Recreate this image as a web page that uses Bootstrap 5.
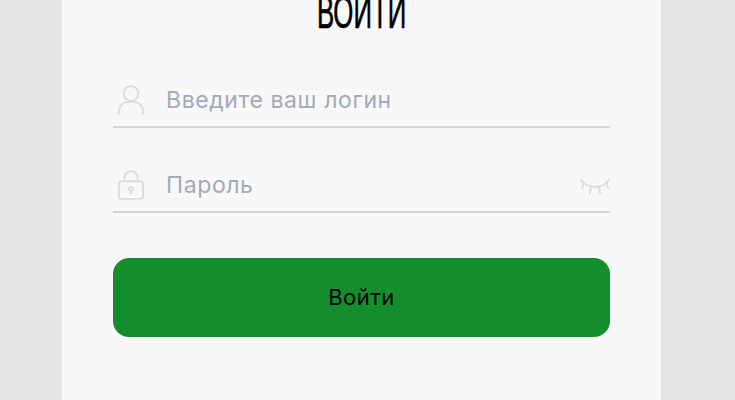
<!DOCTYPE html>
<html lang="ru">
<head>
  <meta charset="UTF-8" />
  <meta name="viewport" content="width=device-width, initial-scale=1" />
  <title>Войти</title>
  <link href="https://cdn.jsdelivr.net/npm/bootstrap@5.3.0/dist/css/bootstrap.min.css" rel="stylesheet" />
  <style>
    html, body { height: 100%; }
    body { background: #e4e4e4; overflow: hidden; font-family: Inter, "Liberation Sans", sans-serif; }
    .login-panel { width: 599px; height: 400px; margin-left: 62px; background: #f8f8f8; padding: 0 51px; }
    .login-title { height: 32px; overflow: hidden; display: flex; align-items: flex-end; justify-content: center; }
    .login-title h1 { font-family: "Liberation Sans", sans-serif; font-size: 46px; line-height: 46px; font-weight: 400; color: #000; margin: 0 0 -3px; transform: scaleX(.56); -webkit-text-stroke: .7px #000; white-space: nowrap; }
    .field-row { height: 54px; border-bottom: 2px solid #d6d6d8; gap: 22px; padding-left: 5px; }
    .field-first { margin-top: 42px; }
    .field-second { margin-top: 31px; }
    .field-row svg { flex: none; fill: none; stroke: #dcdcdc; stroke-width: 2; stroke-linecap: round; stroke-linejoin: round; }
    .field-row input { border: 0; outline: 0; background: transparent; width: 100%; min-width: 0; padding: 0; margin-top: 1px; font-size: 23px; letter-spacing: .6px; font-family: Inter, "Liberation Sans", sans-serif; color: #333; }
    .field-row input::placeholder { color: #a3aab9; opacity: 1; }
    .eye-icon { margin-top: 3px; }
    .btn-login { margin-top: 45px; height: 79px; border-radius: 16px; background: #148e2d; border: 0; color: #000; font-size: 22px; letter-spacing: .5px; }
    .btn-login:hover { background: #148e2d; color: #000; }
  </style>
</head>
<body>
<main class="login-panel">
  <div class="login-title"><h1>ВОЙТИ</h1></div>
  <form>
    <div class="field-row field-first d-flex align-items-center">
      <svg width="26" height="32" viewBox="0 0 28 34"><circle cx="14" cy="10" r="8"/><path d="M1 32v-3a10 10 0 0 1 10-10h6a10 10 0 0 1 10 10v3"/></svg>
      <input type="text" placeholder="Введите ваш логин" />
    </div>
    <div class="field-row field-second d-flex align-items-center">
      <svg width="26" height="32" viewBox="0 0 28 34"><path d="M7 13V9a7 7 0 0 1 14 0v4"/><rect x="1" y="13" width="26" height="19" rx="3"/><circle cx="14" cy="21" r="2"/><path d="M13.5 23v3h1v-3"/></svg>
      <input type="password" placeholder="Пароль" />
      <svg class="eye-icon" width="30" height="16" viewBox="0 0 30 16"><path d="M3 4c7 5 17 5 24 0M1 1l3 3-2 5M29 1l-3 3 2 5M11 8l-1 6M19 8l1 6" /></svg>
    </div>
    <button type="button" class="btn btn-login w-100">Войти</button>
  </form>
</main>
<script src="https://cdn.jsdelivr.net/npm/bootstrap@5.3.0/dist/js/bootstrap.bundle.min.js"></script>
</body>
</html>
